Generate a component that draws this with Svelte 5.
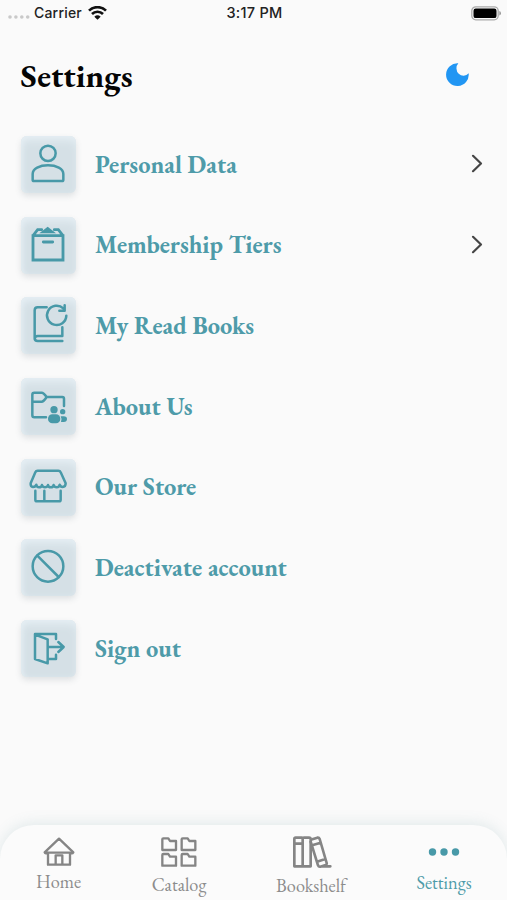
<script>
  // icon paths are drawn on a 165 x 171 grid, one per tile
  const items = [
    { label: 'Personal Data', icon: 'person', arrow: true },
    { label: 'Membership Tiers', icon: 'box', arrow: true },
    { label: 'My Read Books', icon: 'book' },
    { label: 'About Us', icon: 'folder' },
    { label: 'Our Store', icon: 'store' },
    { label: 'Deactivate account', icon: 'ban' },
    { label: 'Sign out', icon: 'exit' }
  ]
  const tabs = ['Home', 'Catalog', 'Bookshelf', 'Settings']
  let active = $state('Settings')
</script>

<div class="screen">
  <div class="status">
    <div class="carrier">
      <svg class="signal" width="22" height="4" viewBox="0 0 22 4">
        <circle cx="2" cy="2" r="1.8" /><circle cx="7.9" cy="2" r="1.8" />
        <circle cx="13.8" cy="2" r="1.8" /><circle cx="19.7" cy="2" r="1.8" />
      </svg>
      <span>Carrier</span>
      <svg class="wifi" width="19" height="14" viewBox="0 0 57 42">
        <path d="M3 14C17 0 40 0 54 14" />
        <path d="M12 24C21 15 36 15 45 24" />
        <path class="dot" d="M19 32Q28.500 24 38 32L28.500 41Z" />
      </svg>
    </div>
    <div class="time">3:17 PM</div>
    <svg class="battery" width="30" height="15" viewBox="0 0 30 15">
      <rect x=".8" y=".8" width="26.400" height="13" rx="4" />
      <rect class="fill" x="2.500" y="2.500" width="23" height="9.600" rx="2.200" />
      <path class="fill tip" d="M28.300 5Q30 5.500 30 7.300T28.300 9.600Z" />
    </svg>
  </div>

  <header>
    <h1>Settings</h1>
    <svg class="moon" width="23" height="23" viewBox="0 0 69 69">
      <path d="M37 1A34 34 0 1 0 68 31A20 21 0 0 1 37 1Z" />
    </svg>
  </header>

  <ul>
    {#each items as item}
      <li>
        <div class="tile">
          <svg viewBox="0 0 165 171">
            {#if item.icon === 'person'}
              <circle cx="81" cy="52" r="23" />
              <path d="M39 135H123Q127 135 127 131V114C127 98 106 88 81 88S35 98 35 114V131Q35 135 39 135Z" />
            {:else if item.icon === 'box'}
              <path class="heavy" d="M36 56H126V129H36ZM36 56L50 38H62M100 38H112L126 56M67 75H95" />
              <path class="solid" d="M80 29L105 49H55Z" />
            {:else if item.icon === 'book'}
              <path d="M77 31H50Q41 31 41 40V124Q41 132 50 132H124M41 126Q41 117 50 117H124V91" />
              <path d="M127 34A29 29 0 1 0 136 56M131 25V41H115" />
            {:else if item.icon === 'folder'}
              <path d="M75 118H40Q34 118 34 112V50Q34 44 40 44H62Q68 44 77 57H124Q129 57 129 62V84M34 71H62Q68 71 77 57" />
              <circle class="solid" cx="99" cy="95" r="11" />
              <circle class="solid" cx="125" cy="101" r="8" />
              <rect class="solid" x="81" y="109" width="37" height="27" rx="13" />
              <path class="solid" d="M119 115H128Q138 115 138 123Q138 132 128 132H120Q124 124 119 115Z" />
            {:else if item.icon === 'store'}
              <path d="M50 35H112Q117 35 119 40L134 73Q134 84 125 84Q118 84 116 77Q115 85 107 85Q100 85 98 78Q97 85 89 85Q82 85 81 78Q79 85 72 85Q65 85 63 78Q62 85 54 85Q47 85 46 77Q44 84 36 84Q28 83 29 73L43 40Q45 35 50 35Z" />
              <path d="M43 95V122Q43 127 48 127H114Q119 127 119 122V95M70 95V127" />
            {:else if item.icon === 'ban'}
              <circle cx="81" cy="82" r="46" />
              <path d="M49 50L113 114" />
            {:else}
              <path d="M105 57V42H42V117L80 130V58L42 44M80 117H105V104M85 81H127M112 66L128 81L112 96" />
            {/if}
          </svg>
        </div>
        <span class="label">{item.label}</span>
        {#if item.arrow}
          <svg class="chevron" width="12" height="19" viewBox="0 0 12 19">
            <path d="M2 1.800L10 9.500L2 17.200" />
          </svg>
        {/if}
      </li>
    {/each}
  </ul>

  <nav>
    {#each tabs as tab}
      <button class={tab.toLowerCase()} class:active={active === tab} onclick={() => (active = tab)}>
        {#if tab === 'Home'}
          <svg width="32" height="30" viewBox="0 0 96 90">
            <path d="M15 47V83H81V47M48 5L5 46Q7 51 15 47H81Q88 51 91 46ZM38 83V55H58V83" />
          </svg>
        {:else if tab === 'Catalog'}
          <svg width="36" height="30" viewBox="0 0 108 90">
            {#each [[4, 4], [62, 4], [4, 51], [62, 51]] as [x, y]}
              <path transform="translate({x} {y})" d="M3 0H18L23 8H41V35H0V3Q0 0 3 0Z" />
            {/each}
          </svg>
        {:else if tab === 'Bookshelf'}
          <svg width="39" height="33" viewBox="0 0 117 99">
            <path d="M8 5H26Q29 5 29 9V91H4V9Q4 5 8 5ZM29 9Q29 5 33 5H48Q53 5 53 10V91H29M4 23H29" />
            <path d="M58 10L73 5Q78 4 80 9L101 81Q102 85 98 87L82 92Q77 93 75 88L53 17M60 27L83 20M72 77L97 69M88 91H112" />
          </svg>
        {:else}
          <svg width="32" height="8" viewBox="0 0 32 8">
            <circle cx="4.500" cy="4" r="3.700" /><circle cx="16" cy="4" r="3.700" /><circle cx="27.500" cy="4" r="3.700" />
          </svg>
        {/if}
        <span>{tab}</span>
      </button>
    {/each}
  </nav>
</div>

<style>
  :global(body) {
    background: #fafafa;
  }
  .screen {
    width: 507px;
    height: 900px;
    display: flex;
    flex-direction: column;
    overflow: hidden;
    background: #fafafa;
    font-family: 'EB Garamond', 'Liberation Serif', serif;
  }
  svg {
    display: block;
    flex: none;
    fill: none;
  }
  .status {
    height: 26px;
    display: grid;
    grid-template-columns: 1fr auto 1fr;
    align-items: center;
    padding: 0 6px 0 8px;
    box-sizing: border-box;
    font: 500 14px/26px Inter, sans-serif;
    letter-spacing: 0.2px;
    color: #222;
  }
  .time {
    font-size: 14.5px;
    letter-spacing: 0.25px;
  }
  .carrier {
    display: flex;
    align-items: center;
  }
  .carrier span {
    margin: 0 6px 0 4px;
  }
  .signal {
    fill: #c9c9c9;
    margin-top: 8px;
  }
  .wifi path {
    stroke: #111;
    stroke-width: 8;
  }
  .wifi .dot {
    fill: #111;
    stroke: none;
  }
  .battery {
    justify-self: end;
  }
  .battery rect {
    stroke: #aaa;
    stroke-width: 1.3;
  }
  .battery .fill {
    fill: #000;
    stroke: none;
  }
  .battery .tip {
    fill: #999;
  }
  header {
    display: flex;
    align-items: flex-start;
    justify-content: space-between;
    height: 110px;
    box-sizing: border-box;
    padding: 30px 38px 0 20.5px;
  }
  h1 {
    margin: 0;
    font-size: 33px;
    line-height: 40px;
    font-weight: bold;
    color: #050505;
  }
  .moon {
    margin-top: 7px;
    fill: #2196f3;
  }
  ul {
    list-style: none;
    margin: 0;
    padding: 0 24px 0 21px;
    display: flex;
    flex-direction: column;
    gap: 23.7px;
  }
  li {
    height: 57px;
    display: flex;
    align-items: center;
  }
  .tile {
    width: 55px;
    height: 57px;
    border-radius: 6px;
    background: #d5e0e6;
    box-shadow: 0 3px 6px rgba(70, 90, 100, 0.15), inset 0 6px 8px -2px #e6eff4, inset 3px 0 5px -1px #e1ebf0;
  }
  .tile svg {
    width: 55px;
    height: 57px;
    stroke: #4899a8;
    stroke-width: 7.5;
    stroke-linecap: round;
    stroke-linejoin: round;
  }
  .tile .heavy {
    stroke-width: 8.5;
    stroke-linejoin: miter;
  }
  .tile .solid {
    fill: #4899a8;
    stroke: none;
  }
  .label {
    flex: 1;
    margin: 0 0 2px 19px;
    font-size: 24.4px;
    line-height: 30px;
    font-weight: bold;
    color: #4e9ba9;
  }
  .chevron {
    margin-bottom: 2px;
    stroke: #454545;
    stroke-width: 2.2;
    stroke-linecap: round;
    stroke-linejoin: round;
  }
  nav {
    height: 75px;
    margin-top: auto;
    display: grid;
    grid-template-columns: 117px 124px 140px 126px;
    border-radius: 34px 34px 0 0;
    background: #fbfbfb;
    box-shadow: 0 -2px 14px rgba(90, 140, 150, 0.15);
  }
  button {
    display: flex;
    flex-direction: column;
    align-items: center;
    padding: 12px 0 0;
    border: 0;
    background: none;
    font-family: inherit;
    font-size: 18.3px;
    line-height: 20px;
    color: #8c8c8c;
  }
  button svg {
    stroke: #858585;
    stroke-width: 7;
    stroke-linejoin: round;
    stroke-linecap: round;
  }
  button span {
    margin-top: 5px;
  }
  .catalog span {
    margin-top: 8px;
  }
  .bookshelf {
    padding-top: 11px;
  }
  .bookshelf svg {
    margin-left: 3px;
    stroke-width: 8;
  }
  .bookshelf span {
    margin-top: 7px;
  }
  .settings {
    padding-top: 23px;
  }
  .settings svg {
    stroke: none;
    fill: #8c8c8c;
  }
  .settings span {
    margin-top: 17px;
  }
  .settings.active svg {
    fill: #4899a8;
  }
  .active {
    color: #4e9ba9;
  }
</style>
